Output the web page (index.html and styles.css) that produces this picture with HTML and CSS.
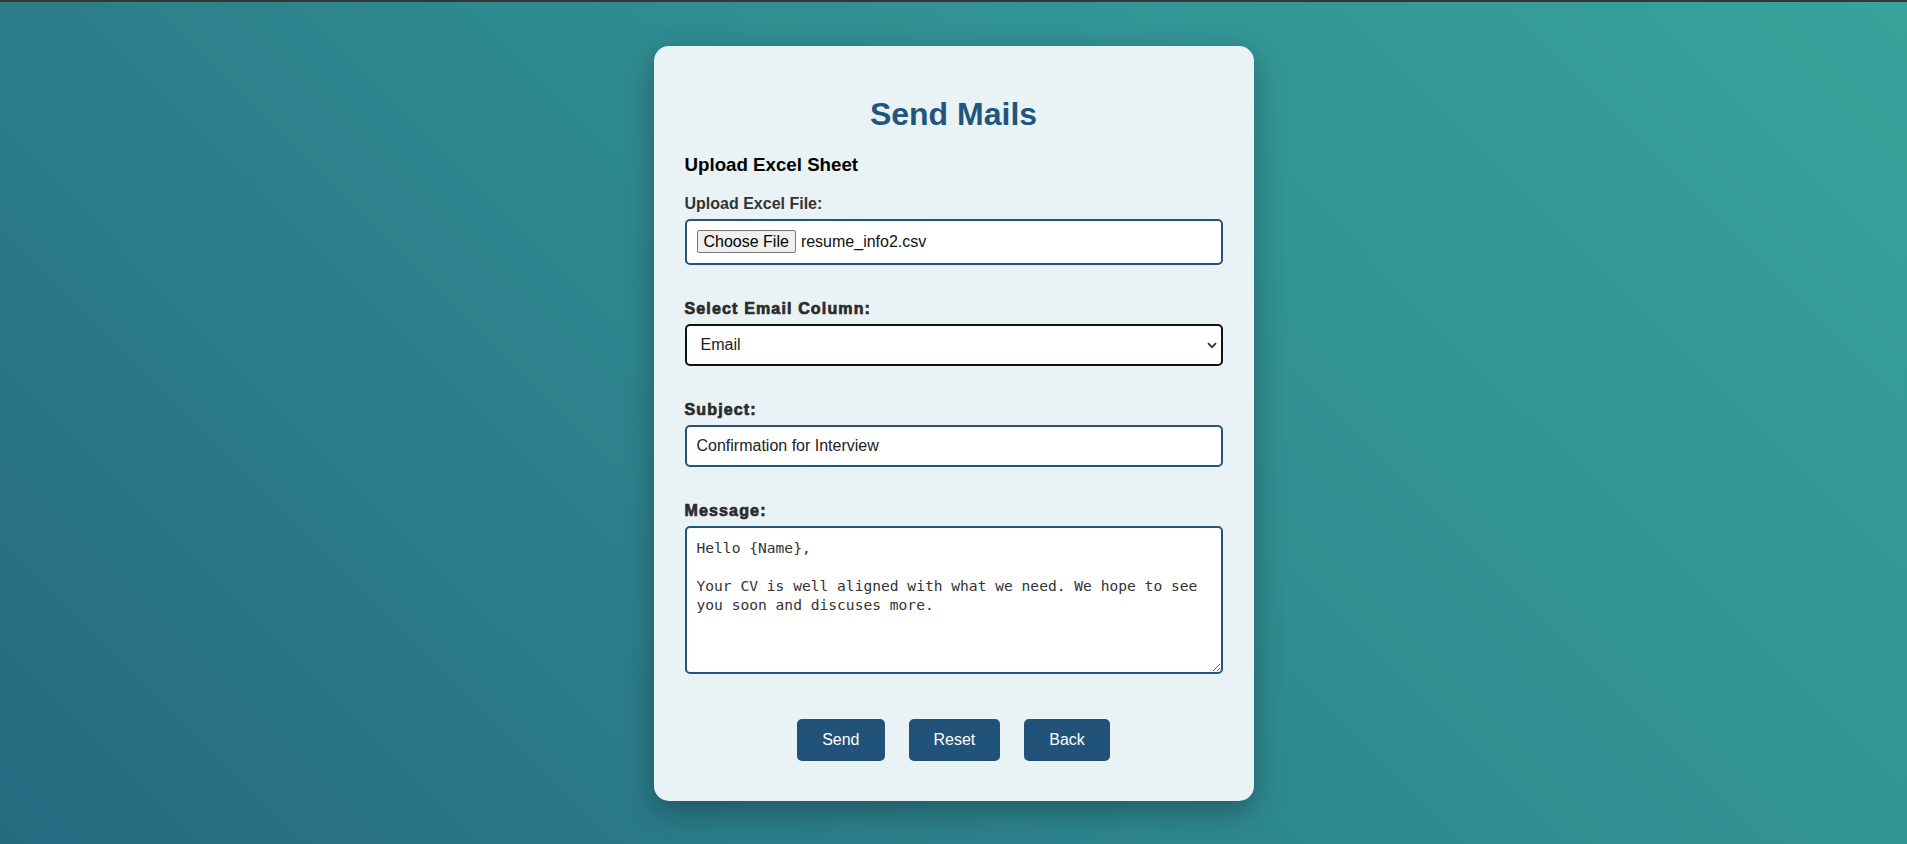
FILE: index.html
```html
<!DOCTYPE html>
<html lang="en">
<head>
<meta charset="utf-8">
<title>Send Mails</title>
<link rel="stylesheet" href="styles.css">
</head>
<body>
  <main class="card">
    <h1 class="title">Send Mails</h1>
    <h3 class="section">Upload Excel Sheet</h3>

    <div class="group">
      <label class="label">Upload Excel File:</label>
      <div class="file-box">
        <span class="file-btn">Choose File</span>
        <span class="file-name">resume_info2.csv</span>
      </div>
    </div>

    <div class="group">
      <label class="label heavy" for="col">Select Email Column:</label>
      <div class="select-wrap">
        <select id="col" class="field select">
          <option>Email</option>
        </select>
        <svg class="chevron" width="10" height="7" viewBox="0 0 10 7" aria-hidden="true"><path d="M1 1.2 L5 5.2 L9 1.2" fill="none" stroke="#333" stroke-width="1.8"/></svg>
      </div>
    </div>

    <div class="group">
      <label class="label heavy" for="subj">Subject:</label>
      <input id="subj" class="field" type="text" value="Confirmation for Interview">
    </div>

    <div class="group last">
      <label class="label heavy" for="msg">Message:</label>
      <textarea id="msg" class="field message">Hello {Name},

Your CV is well aligned with what we need. We hope to see you soon and discuses more.</textarea>
    </div>

    <div class="actions">
      <button class="btn" type="button">Send</button>
      <button class="btn" type="button">Reset</button>
      <button class="btn" type="button">Back</button>
    </div>
  </main>
</body>
</html>
```

FILE: styles.css
```css
* {
  box-sizing: border-box;
}

html, body {
  margin: 0;
  padding: 0;
}

body {
  min-height: 100vh;
  border-top: 2px solid #363636;
  display: flex;
  align-items: center;
  justify-content: center;
  background: linear-gradient(45deg, #266a80 0%, #2f8a90 50%, #37a39b 100%);
  font-family: "Liberation Sans", Arial, sans-serif;
}

.card {
  width: 600px;
  background: #e9f2f4;
  border-radius: 15px;
  padding: 29px 31px 40px;
  box-shadow: 0 10px 30px rgba(0, 0, 0, 0.3);
}

.title {
  margin: 21px 0;
  font-size: 32px;
  font-weight: 700;
  text-align: center;
  color: #22557d;
  line-height: 37px;
}

.section {
  margin: 0 0 19px;
  font-size: 18.72px;
  font-weight: 700;
  color: #000;
  line-height: 22px;
}

.group {
  margin-bottom: 35px;
}

.group.last {
  margin-bottom: 45px;
}

.label {
  display: block;
  margin-bottom: 6px;
  font-size: 16px;
  font-weight: 700;
  line-height: 18px;
  color: #333;
}

.label.heavy {
  color: #2b2b2b;
  letter-spacing: 1.15px;
  -webkit-text-stroke: 0.7px #2b2b2b;
}

.file-box {
  display: flex;
  align-items: center;
  height: 46px;
  padding: 0 10px;
  background: #fff;
  border: 2px solid #22557a;
  border-radius: 5px;
  font-size: 16px;
}

.file-btn {
  display: inline-block;
  height: 23px;
  padding: 1px 6px;
  line-height: 19px;
  background: #efefef;
  border: 1px solid #767676;
  border-radius: 2px;
  color: #000;
  margin-right: 5px;
}

.file-name {
  color: #111;
}

.field {
  display: block;
  width: 100%;
  height: 42px;
  padding: 10px;
  border: 2px solid #22557a;
  border-radius: 5px;
  background: #fff;
  font-family: "Liberation Sans", Arial, sans-serif;
  font-size: 16px;
  line-height: 18px;
  color: #222;
  outline: none;
}

.select-wrap {
  position: relative;
}

.select {
  appearance: none;
  -webkit-appearance: none;
  border-color: #111;
  padding-left: 14px;
  color: #222;
}

.chevron {
  position: absolute;
  right: 6px;
  top: 18px;
}

.message {
  height: 148px;
  resize: vertical;
  font-family: "DejaVu Sans Mono", "Liberation Mono", monospace;
  font-size: 14.6px;
  line-height: 19px;
  color: #333;
}

.actions {
  display: flex;
  justify-content: center;
  gap: 24px;
}

.btn {
  height: 42px;
  padding: 0 25px;
  border: none;
  border-radius: 5px;
  background: #21527a;
  color: #fff;
  font-family: "Liberation Sans", Arial, sans-serif;
  font-size: 16px;
  cursor: pointer;
}
```
